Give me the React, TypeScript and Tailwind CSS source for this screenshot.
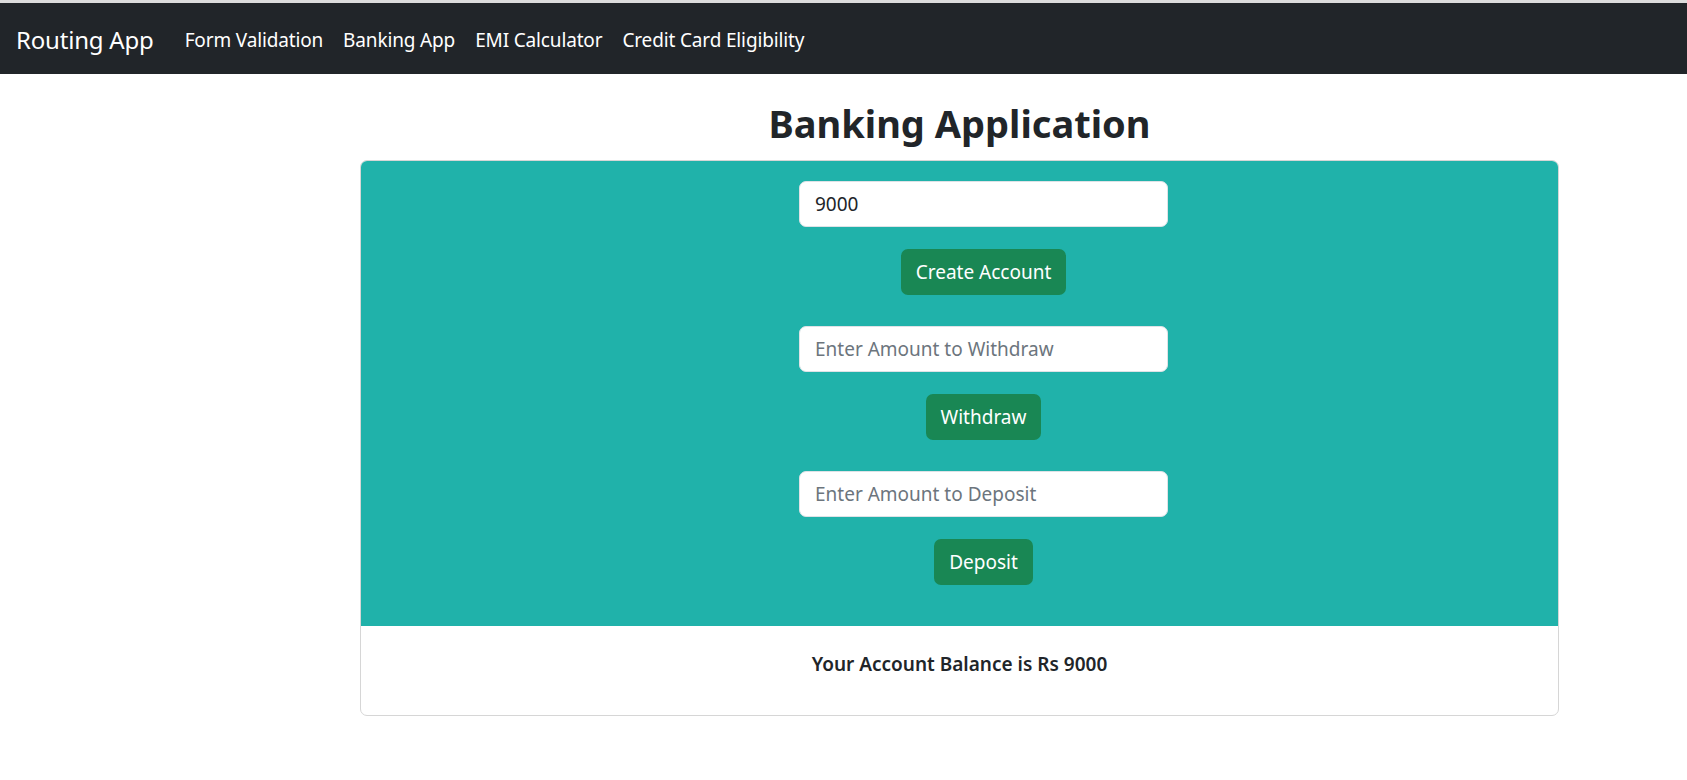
import React from "react";

const font = { fontFamily: '"Segoe UI", "Noto Sans", "Open Sans", sans-serif' };

export default function App() {
  return (
    <div className="min-h-screen bg-white text-[#212529]" style={font}>
      <div className="h-[3px] bg-[#dcdcdc]" />
      <nav className="h-[71px] bg-[#212529] flex items-center pl-[16px] pt-[3px]">
        <span className="text-[24px] text-white mr-[31px] tracking-[-0.2px]">Routing App</span>
        <div className="flex gap-[20px] text-[19px] text-white tracking-[-0.15px]">
          <span>Form Validation</span>
          <span>Banking App</span>
          <span>EMI Calculator</span>
          <span>Credit Card Eligibility</span>
        </div>
      </nav>
      <div className="ml-[360px] w-[1199px]">
        <h1 className="text-center text-[38px] font-bold leading-[48px] pt-[25px] pb-[13px]">
          Banking Application
        </h1>
        <div className="border border-[#d6d6d6] rounded-[7px] overflow-hidden">
          <div className="bg-[#20b2aa] pt-[20px] pb-[41px] pl-[48px] flex flex-col items-center">
            <input
              className="w-[369px] h-[46px] bg-white border border-[#dee2e6] rounded-[7px] px-[15px] text-[19px] text-[#212529] placeholder:text-[#6c757d] outline-none"
              defaultValue="9000"
            />
            <button className="mt-[22px] h-[46px] px-[15px] rounded-[7px] bg-[#198754] text-white text-[19px]">
              Create Account
            </button>
            <input
              className="mt-[31px] w-[369px] h-[46px] bg-white border border-[#dee2e6] rounded-[7px] px-[15px] text-[19px] text-[#212529] placeholder:text-[#6c757d] outline-none"
              placeholder="Enter Amount to Withdraw"
            />
            <button className="mt-[22px] h-[46px] px-[15px] rounded-[7px] bg-[#198754] text-white text-[19px]">
              Withdraw
            </button>
            <input
              className="mt-[31px] w-[369px] h-[46px] bg-white border border-[#dee2e6] rounded-[7px] px-[15px] text-[19px] text-[#212529] placeholder:text-[#6c757d] outline-none"
              placeholder="Enter Amount to Deposit"
            />
            <button className="mt-[22px] h-[46px] px-[15px] rounded-[7px] bg-[#198754] text-white text-[19px]">
              Deposit
            </button>
          </div>
          <div className="pt-[24px] pb-[37px] leading-[28px] text-center text-[19px] font-semibold">
            Your Account Balance is Rs 9000
          </div>
        </div>
      </div>
    </div>
  );
}
